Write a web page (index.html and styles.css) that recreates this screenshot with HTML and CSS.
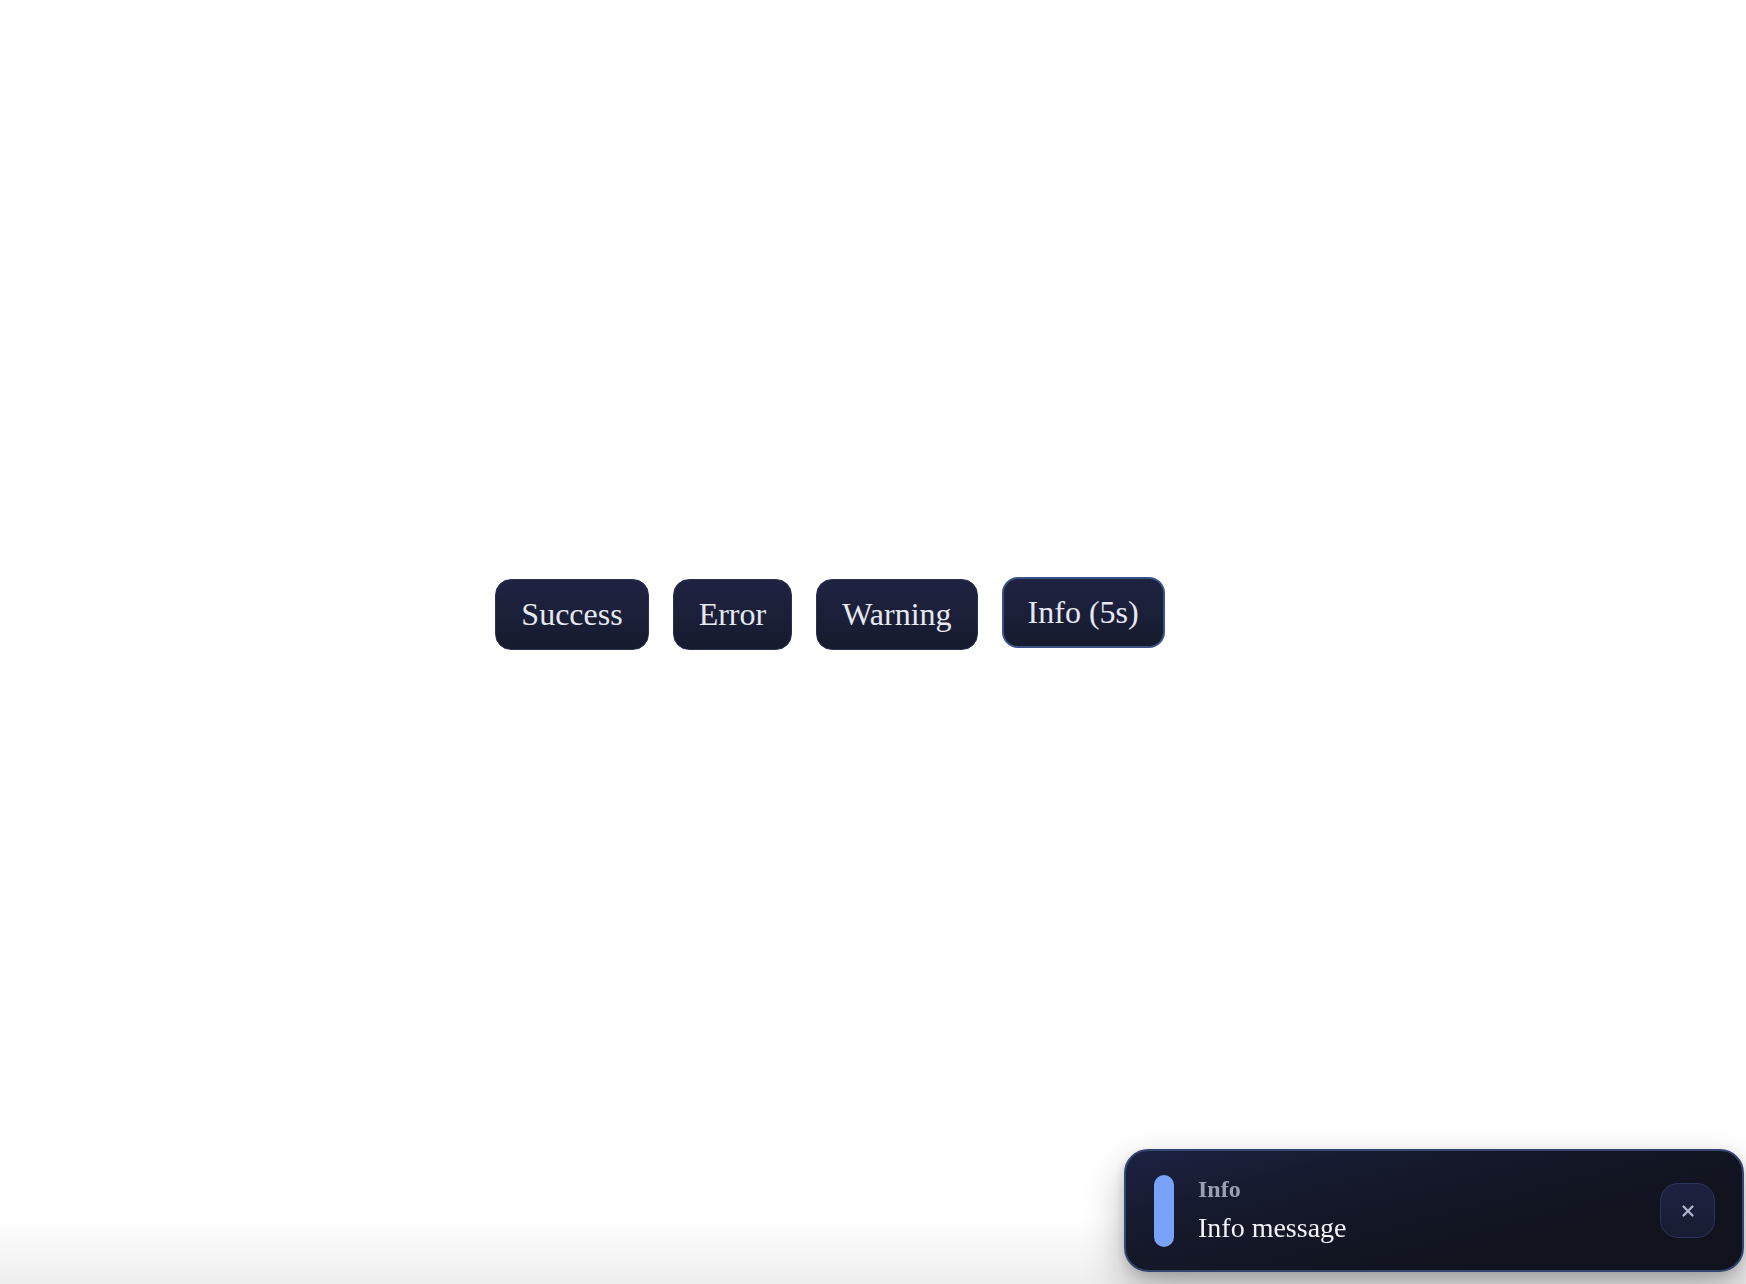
FILE: index.html
```html
<!DOCTYPE html>
<html lang="en">
<head>
<meta charset="utf-8">
<title>Toasts</title>
<link rel="stylesheet" href="styles.css">
</head>
<body>
<main class="stage">
  <div class="actions">
    <button class="btn">Success</button>
    <button class="btn">Error</button>
    <button class="btn">Warning</button>
    <button class="btn btn-active">Info (5s)</button>
  </div>
</main>
<div class="fade"></div>
<div class="toast" role="status">
  <span class="accent"></span>
  <div class="toast-text">
    <div class="toast-title">Info</div>
    <div class="toast-msg">Info message</div>
  </div>
  <button class="close" aria-label="Close">
    <svg width="12" height="12" viewBox="0 0 12 12"><path d="M1.5 1.5 L10.5 10.5 M10.5 1.5 L1.5 10.5" stroke="#b4b8cc" stroke-width="2.2" stroke-linecap="round"/></svg>
  </button>
</div>
</body>
</html>
```

FILE: styles.css
```css
html, body {
  margin: 0;
  padding: 0;
  background: #ffffff;
  font-family: "Liberation Serif", "Times New Roman", serif;
}

.stage {
  min-height: 100vh;
  box-sizing: border-box;
  display: flex;
  align-items: center;
  justify-content: center;
  padding-right: 86px;
  padding-bottom: 55px;
}

.actions {
  display: flex;
  align-items: center;
  gap: 24px;
}

.btn {
  font-family: "Liberation Serif", "Times New Roman", serif;
  font-size: 32px;
  line-height: 37px;
  color: #e6e8f2;
  background: linear-gradient(180deg, #1f2342 0%, #171b2e 100%);
  border: 1px solid #2b3152;
  border-radius: 16px;
  padding: 16px 25px;
  margin: 0;
  cursor: pointer;
}

.btn-active {
  border: 2px solid #3c5287;
  padding: 15px 24px;
  transform: translateY(-2px);
}

.fade {
  position: fixed;
  left: 0;
  right: 0;
  bottom: 0;
  height: 66px;
  background: linear-gradient(180deg, rgba(0,0,0,0) 0%, rgba(0,0,0,0.065) 100%);
  z-index: 1;
}

.toast {
  position: fixed;
  right: 2px;
  bottom: 12px;
  width: 620px;
  height: 123px;
  box-sizing: border-box;
  z-index: 2;
  display: flex;
  align-items: center;
  padding: 0 27px 0 28px;
  border: 2px solid #34466f;
  border-radius: 24px;
  background: linear-gradient(165deg, #1d2142 0%, #141829 35%, #11141f 70%, #10131d 100%);
  box-shadow: 0 18px 40px rgba(0, 0, 0, 0.28), 0 4px 12px rgba(0, 0, 0, 0.15);
}

.accent {
  width: 20px;
  height: 72px;
  border-radius: 10px;
  background: #78a3f8;
  flex: none;
}

.toast-text {
  flex: 1;
  margin-left: 24px;
  display: flex;
  flex-direction: column;
  gap: 9px;
  padding-bottom: 2px;
}

.toast-title {
  font-size: 24px;
  line-height: 27px;
  font-weight: bold;
  color: #9a9fb1;
}

.toast-msg {
  font-size: 28px;
  line-height: 31px;
  color: #f2f3f8;
}

.close {
  width: 55px;
  height: 55px;
  flex: none;
  box-sizing: border-box;
  border: 1.5px solid #2c3558;
  border-radius: 18px;
  background: linear-gradient(180deg, #1d2140 0%, #181c33 100%);
  display: flex;
  align-items: center;
  justify-content: center;
  padding: 0;
  margin: 0;
  cursor: pointer;
}

.close svg {
  display: block;
}
```
